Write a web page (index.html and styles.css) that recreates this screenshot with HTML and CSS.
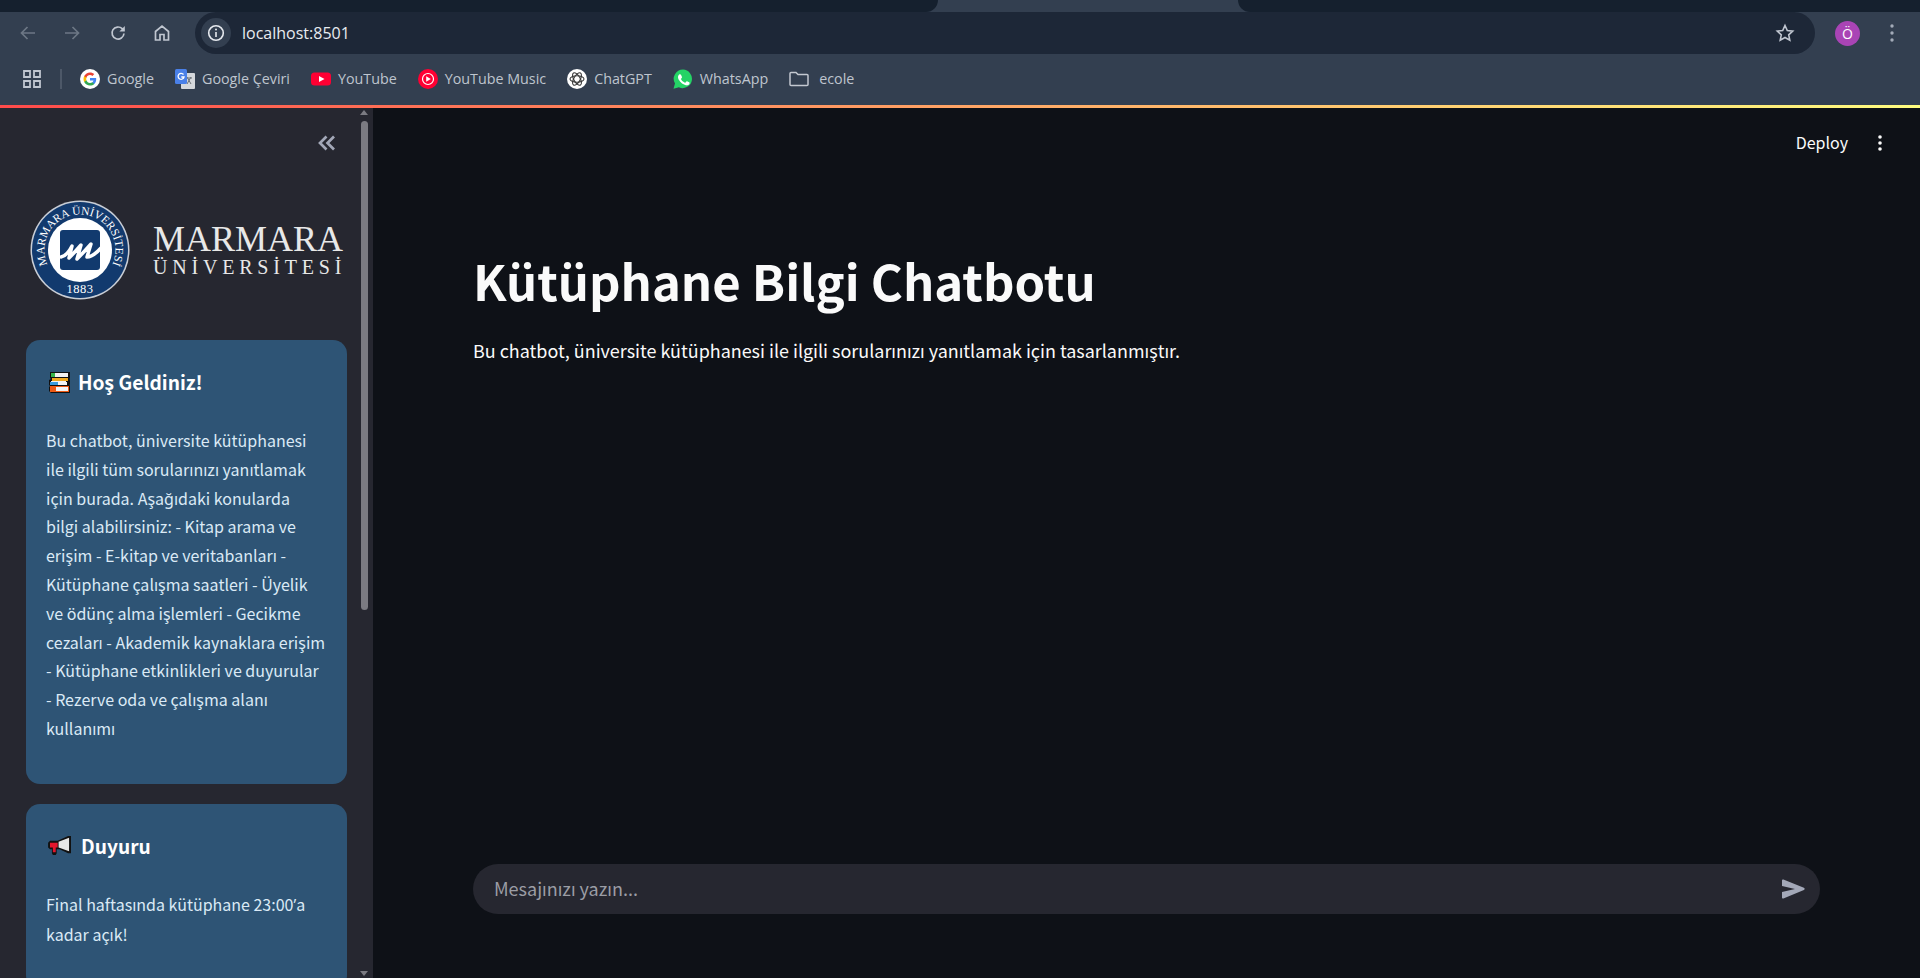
FILE: index.html
```html
<!DOCTYPE html>
<html lang="en">
<head>
    <meta charset="UTF-8">
    <meta name="viewport" content="width=device-width, initial-scale=1.0">
    <title>Kütüphane Bilgi Chatbotu</title>
    <link rel="stylesheet" href="styles.css">
</head>
<body>
    <div class="tab-strip">
        <div class="tab-left"></div>
        <div class="tab-right"></div>
    </div>
    <header class="browser">
        <div class="nav-row">
            <svg class="nav-icon dim" viewBox="0 0 20 20"><path d="M17 10H4M9.500 4L3.500 10l6 6"/></svg>
            <svg class="nav-icon dim" viewBox="0 0 20 20"><path d="M3 10h13M10.500 4l6 6-6 6"/></svg>
            <svg class="nav-icon reload" viewBox="0 0 20 20"><path d="M16 10.500a6 6 0 1 1-1.800-4.800L16 7.500"/><path class="solid" d="M16.800 3v5.400h-5.400z"/></svg>
            <svg class="nav-icon" viewBox="0 0 20 20"><path d="M3.500 17V8.500L10 3l6.500 5.500V17H12v-5.500H8V17z"/></svg>
            <div class="address">
                <span class="info-btn">
                    <svg viewBox="0 0 18 18"><circle cx="9" cy="9" r="7.300"/><path d="M9 8v5"/><circle class="solid" cx="9" cy="5.400" r="1"/></svg>
                </span>
                <span class="url">localhost:8501</span>
                <svg class="star" viewBox="0 0 20 20"><path d="M10 2.500l2.300 5 5.400.6-4 3.700 1.100 5.400L10 14.500l-4.800 2.700 1.100-5.400-4-3.700 5.400-.6z"/></svg>
            </div>
            <span class="avatar">Ö</span>
            <svg class="kebab" viewBox="0 0 4 20"><circle cx="2" cy="3" r="1.700"/><circle cx="2" cy="10" r="1.700"/><circle cx="2" cy="17" r="1.700"/></svg>
        </div>
        <div class="bookmarks">
            <svg class="apps" viewBox="0 0 18 18"><path d="M1 1h6v6H1zM11 1h6v6h-6zM1 11h6v6H1zM11 11h6v6h-6z"/></svg>
            <span class="bm-sep"></span>
            <a class="bm">
                <svg viewBox="0 0 20 20"><circle cx="10" cy="10" r="10" fill="#fff"/><path fill="#4285f4" d="M16.200 10.200c0-.5 0-.9-.1-1.300H10v2.500h3.500c-.2.800-.6 1.500-1.300 2v1.600h2.100c1.200-1.100 1.900-2.800 1.900-4.800z"/><path fill="#34a853" d="M10 16.500c1.800 0 3.200-.6 4.300-1.600l-2.100-1.600c-.6.400-1.300.6-2.200.6-1.700 0-3.100-1.100-3.600-2.700H4.200v1.700c1.100 2.100 3.300 3.600 5.800 3.600z"/><path fill="#fbbc05" d="M6.400 11.200c-.3-.8-.3-1.600 0-2.400V7.100H4.200c-.9 1.800-.9 4 0 5.800z"/><path fill="#ea4335" d="M10 6.100c.9 0 1.800.3 2.400.9l1.900-1.900C13.200 4.100 11.700 3.500 10 3.500c-2.500 0-4.700 1.500-5.800 3.600l2.200 1.700C6.900 7.200 8.300 6.100 10 6.100z"/></svg>
                Google
            </a>
            <a class="bm">
                <svg viewBox="0 0 20 20"><rect x="6" y="4" width="14" height="16" rx="1" fill="#d5d8dc"/><path d="M12 8l4 7M16 8l-4 7M11 9h6" fill="none" stroke="#6b7076" stroke-width="1"/><rect width="12" height="15" rx="1.500" fill="#4a80e8"/><path d="M8.500 5.500a3 3 0 1 0 .5 2.500H6.300" fill="none" stroke="#fff" stroke-width="1.300"/></svg>
                Google Çeviri
            </a>
            <a class="bm">
                <svg viewBox="0 0 20 20"><rect y="3.500" width="20" height="13" rx="3.500" fill="#ff0033"/><path d="M8 7l5.500 3L8 13z" fill="#fff"/></svg>
                YouTube
            </a>
            <a class="bm">
                <svg viewBox="0 0 20 20"><circle cx="10" cy="10" r="10" fill="#ff0033"/><circle cx="10" cy="10" r="5.500" fill="none" stroke="#fff" stroke-width="1.200"/><path d="M8.200 7.300l4.600 2.700-4.600 2.700z" fill="#fff"/></svg>
                YouTube Music
            </a>
            <a class="bm">
                <svg viewBox="0 0 20 20"><circle cx="10" cy="10" r="10" fill="#fff"/><g fill="none" stroke="#3a3a3a" stroke-width="1.100"><ellipse cx="10" cy="10" rx="7" ry="3.200"/><ellipse cx="10" cy="10" rx="7" ry="3.200" transform="rotate(60 10 10)"/><ellipse cx="10" cy="10" rx="7" ry="3.200" transform="rotate(120 10 10)"/></g></svg>
                ChatGPT
            </a>
            <a class="bm">
                <svg viewBox="0 0 20 20"><path fill="#25d366" d="M10 .5a9.300 9.300 0 0 0-8 14L.5 19.700l5.400-1.400A9.300 9.300 0 1 0 10 .5z"/><path fill="#fff" d="M7 5.300c-.3 0-.7.100-1 .5-.4.400-1 1.100-1 2.500s1 2.800 1.200 3c.1.200 2 3.100 4.900 4.300 2.400 1 2.900.8 3.400.7.500 0 1.700-.7 1.900-1.300.2-.7.200-1.200.2-1.300-.1-.2-.3-.2-.5-.4l-2-1c-.3-.1-.5-.1-.7.200l-.9 1.100c-.2.200-.3.200-.6.100-.3-.2-1.200-.5-2.300-1.400-.9-.8-1.400-1.700-1.600-2-.2-.3 0-.5.100-.6l.9-1.100c.1-.2.100-.4 0-.6l-.9-2.100c-.2-.5-.4-.5-.6-.5z"/></svg>
                WhatsApp
            </a>
            <a class="bm bm-folder">
                <svg viewBox="0 0 20 20"><path fill="none" stroke="#c3c8d0" stroke-width="1.500" d="M1 4.500c0-.6.400-1 1-1h5l2 2h9c.6 0 1 .4 1 1v9c0 .6-.4 1-1 1H2c-.6 0-1-.4-1-1z"/></svg>
                ecole
            </a>
        </div>
    </header>
    <div class="accent-line"></div>
    <div class="app">
        <aside class="sidebar">
            <div class="side-content">
                <div class="collapse-row">
                    <svg viewBox="0 0 18 16"><path d="M8.500 1.500L2 8l6.500 6.500M16 1.500L9.500 8l6.500 6.500"/></svg>
                </div>
                <div class="logo">
                    <svg class="seal" viewBox="0 0 100 100">
                        <defs>
                            <path id="seal-top" d="M19.300 67.750A35.500 35.500 0 1 1 80.700 67.750"/>
                        </defs>
                        <circle cx="50" cy="50" r="49.500" fill="#c9ced6"/>
                        <circle cx="50" cy="50" r="48" fill="#123a6e"/>
                        <circle cx="50" cy="50" r="32" fill="#fff"/>
                        <rect x="30" y="30" width="40" height="40" rx="3" fill="#123a6e"/>
                        <path class="seal-m" d="M31 57Q37 56 42 46L39 58Q45 52 51 45L47 59Q54 52 61 44L57 57Q63 57 71 48"/>
                        <text class="seal-text"><textPath href="#seal-top" startOffset="50%" text-anchor="middle">MARMARA ÜNİVERSİTESİ</textPath></text>
                        <text class="seal-year" x="50" y="93" text-anchor="middle">1883</text>
                    </svg>
                    <div class="logo-name">
                        <span class="logo-big">MARMARA</span>
                        <span class="logo-small">ÜNİVERSİTESİ</span>
                    </div>
                </div>
                <section class="card">
                    <h3>
                        <svg class="emoji" viewBox="0 0 21 21">
                            <path fill="#111" d="M1 0h20v6.500l-1 .5 1 .5v5l-1 .5 1 .5v7.500H2l-2-2v-4l1-1-1-1V8l2-1-1-1z"/>
                            <path fill="#35b34a" d="M2 1h4v4H2z"/><path fill="#f2f2f2" d="M6 1h13v4H6z"/>
                            <path fill="#f0a81e" d="M3 6h16v3H3z"/><path fill="#f2f2f2" d="M2 9h15v1H2z"/>
                            <path fill="#3a9bdc" d="M1 10h8v3H1z"/><path fill="#f2f2f2" d="M9 10h9v3H9z"/>
                            <path fill="#ef5a14" d="M1 14h19v6H1z"/><path fill="#f4f4f4" d="M7 15h12v4H7z"/>
                        </svg>
                        Hoş Geldiniz!
                    </h3>
                    <p>Bu chatbot, üniversite kütüphanesi<br>ile ilgili tüm sorularınızı yanıtlamak<br>için burada. Aşağıdaki konularda<br>bilgi alabilirsiniz: - Kitap arama ve<br>erişim - E-kitap ve veritabanları -<br>Kütüphane çalışma saatleri - Üyelik<br>ve ödünç alma işlemleri - Gecikme<br>cezaları - Akademik kaynaklara erişim<br>- Kütüphane etkinlikleri ve duyurular<br>- Rezerve oda ve çalışma alanı<br>kullanımı</p>
                </section>
                <section class="card">
                    <h3>
                        <svg class="emoji emoji-wide" viewBox="0 0 26 22">
                            <path fill="#111" d="M24 1v18h-3L12 15H9v4l-1 2H5l-1-2v-4H2l-2-2V8l2-2h8l11-5z"/>
                            <path fill="#e8e8e8" d="M11 7l11-4v14l-11-4z"/>
                            <path fill="#e3162c" d="M2 8h8v5H2zM5 13h3v5H5z"/>
                        </svg>
                        Duyuru
                    </h3>
                    <p>Final haftasında kütüphane 23:00<span class="apos">’</span>a<br>kadar açık!</p>
                </section>
            </div>
            <div class="scrollbar">
                <span class="arrow-up"></span>
                <span class="thumb"></span>
                <span class="arrow-down"></span>
            </div>
        </aside>
        <main class="main">
            <div class="app-header">
                <span class="deploy">Deploy</span>
                <svg class="app-menu" viewBox="0 0 4 16"><circle cx="2" cy="2" r="1.800"/><circle cx="2" cy="8" r="1.800"/><circle cx="2" cy="14" r="1.800"/></svg>
            </div>
            <div class="content">
                <h1>Kütüphane Bilgi Chatbotu</h1>
                <p>Bu chatbot, üniversite kütüphanesi ile ilgili sorularınızı yanıtlamak için tasarlanmıştır.</p>
            </div>
            <div class="chat-input">
                <span class="placeholder">Mesajınızı yazın...</span>
                <svg class="send" viewBox="0 0 24 20"><path d="M1 1.500c0-.8.700-1.200 1.400-1l20.500 8.300c1 .4 1 1.800 0 2.200L2.400 19.400c-.7.300-1.400-.2-1.400-1V13l13-3L1 7z"/></svg>
            </div>
        </main>
    </div>
</body>
</html>
```

FILE: styles.css
```css
* {
    box-sizing: border-box;
}

html, body {
    height: 100%;
}

body {
    margin: 0;
    display: flex;
    flex-direction: column;
    overflow: hidden;
    background-color: #333f50;
    font-family: "Noto Sans CJK SC", "Noto Sans", sans-serif;
    color: #fafafa;
}

/* browser chrome */
.tab-strip {
    display: flex;
    justify-content: space-between;
    height: 12px;
    flex: none;
}

.tab-left, .tab-right {
    background-color: #15202e;
}

.tab-left {
    width: 938px;
    border-bottom-right-radius: 12px;
}

.tab-right {
    width: 682px;
    border-bottom-left-radius: 12px;
}

.browser {
    flex: none;
    height: 93px;
    background-color: #333f50;
    font-family: "Open Sans", "Noto Sans", sans-serif;
}

.nav-row {
    display: flex;
    align-items: center;
    height: 42px;
    padding-left: 18px;
}

.nav-icon {
    width: 20px;
    height: 20px;
    margin-right: 24px;
    fill: none;
    stroke: #c0c6d0;
    stroke-width: 1.700;
}

.nav-icon.dim {
    stroke: #6d7785;
}

.nav-icon.reload {
    margin-left: 2px;
}

.solid {
    fill: #c0c6d0;
    stroke: none;
}

.address {
    display: flex;
    align-items: center;
    width: 1620px;
    height: 42px;
    margin-left: -1px;
    padding: 0 20px 0 6px;
    border-radius: 21px;
    background-color: #1d2737;
}

.info-btn {
    display: flex;
    align-items: center;
    justify-content: center;
    width: 30px;
    height: 30px;
    border-radius: 50%;
    background-color: #333f50;
}

.info-btn svg {
    width: 18px;
    height: 18px;
    fill: none;
    stroke: #e6e9ee;
    stroke-width: 1.600;
}

.info-btn .solid {
    fill: #e6e9ee;
    stroke: none;
}

.url {
    flex: 1;
    margin-left: 11px;
    font-size: 16px;
    color: #e8ebf0;
}

.star {
    width: 20px;
    height: 20px;
    fill: none;
    stroke: #c0c6d0;
    stroke-width: 1.600;
}

.avatar {
    display: flex;
    align-items: center;
    justify-content: center;
    width: 25px;
    height: 25px;
    margin-left: 20px;
    border-radius: 50%;
    background-color: #a944b5;
    font-size: 14px;
    line-height: 25px;
    color: #fff;
}

.kebab {
    width: 4px;
    height: 20px;
    margin-left: 30px;
    fill: #a3abb8;
}

.bookmarks {
    display: flex;
    align-items: center;
    height: 49px;
    padding-left: 23px;
}

.apps {
    width: 18px;
    height: 18px;
    fill: none;
    stroke: #c0c6d0;
    stroke-width: 1.800;
}

.bm-sep {
    width: 2px;
    height: 20px;
    margin-left: 19px;
    margin-right: 18px;
    background-color: #4d5868;
}

.bm {
    display: flex;
    align-items: center;
    gap: 7px;
    margin-right: 21px;
    font-size: 14.300px;
    color: #bfc5ce;
}

.bm svg {
    width: 20px;
    height: 20px;
}

.bm-folder {
    gap: 10px;
}

.accent-line {
    flex: none;
    height: 3px;
    background: linear-gradient(90deg, #ff4b4b, #fffd80);
}

/* streamlit app */
.app {
    flex: 1;
    display: flex;
    min-height: 0;
}

.sidebar {
    flex: none;
    display: flex;
    width: 373px;
    background-color: #262730;
    overflow: hidden;
}

.side-content {
    flex: 1;
    padding: 0 11px 0 26px;
    min-width: 0;
}

.collapse-row {
    display: flex;
    justify-content: flex-end;
    padding: 27px 11px 0 0;
    height: 92px;
}

.collapse-row svg {
    width: 18px;
    height: 16px;
    fill: none;
    stroke: #a3a8b8;
    stroke-width: 2.700;
}

.logo {
    display: flex;
    align-items: center;
    height: 100px;
    margin-left: 4px;
    gap: 23px;
}

.seal {
    flex: none;
    width: 100px;
    height: 100px;
}

.seal-m {
    fill: none;
    stroke: #fff;
    stroke-width: 3.500;
    stroke-linejoin: round;
    stroke-linecap: round;
}

.seal-text {
    font-family: "Liberation Serif", serif;
    font-size: 11.500px;
    fill: #fff;
}

.seal-year {
    font-family: "Liberation Serif", serif;
    font-size: 12.500px;
    letter-spacing: 0.500px;
    fill: #fff;
}

.logo-name {
    display: flex;
    flex-direction: column;
    font-family: "Liberation Serif", serif;
    color: #e8e8e8;
    white-space: nowrap;
}

.logo-big {
    font-size: 36px;
    line-height: 34px;
}

.logo-small {
    font-size: 20px;
    line-height: 22px;
    letter-spacing: 4.800px;
}

.card {
    margin-top: 40px;
    padding: 19px 20px 21px;
    border-radius: 14px;
    background-color: #2e5475;
}

.card + .card {
    margin-top: 20px;
}

.card h3 {
    display: flex;
    align-items: center;
    gap: 8px;
    height: 46px;
    margin: 0 0 21px;
    font-size: 19.200px;
    font-weight: 700;
    color: #fff;
}

.emoji {
    flex: none;
    width: 21px;
    height: 21px;
    margin-left: 3px;
}

.emoji-wide {
    width: 25px;
    margin-left: 2px;
}

.card p {
    margin: 0 0 20px;
    font-size: 16px;
    line-height: 28.800px;
    white-space: nowrap;
    color: #dbeaf6;
}

.apos {
    font-family: "Open Sans", sans-serif;
}

.scrollbar {
    flex: none;
    display: flex;
    flex-direction: column;
    align-items: center;
    width: 15px;
    padding: 2px 3px 2px 0;
}

.thumb {
    width: 7px;
    height: 489px;
    margin-top: 6px;
    border-radius: 4px;
    background-color: #7b7b82;
}

.arrow-up, .arrow-down {
    width: 0;
    height: 0;
    border-left: 4px solid transparent;
    border-right: 4px solid transparent;
}

.arrow-up {
    border-bottom: 5px solid #7b7b82;
}

.arrow-down {
    margin-top: auto;
    border-top: 5px solid #7b7b82;
}

.main {
    flex: 1;
    display: flex;
    flex-direction: column;
    min-width: 0;
    background-color: #0e1117;
}

.app-header {
    display: flex;
    align-items: center;
    justify-content: flex-end;
    height: 70px;
    padding-right: 38px;
    flex: none;
}

.deploy {
    padding-bottom: 2px;
    font-size: 16px;
    color: #fafafa;
}

.app-menu {
    width: 4px;
    height: 16px;
    margin-left: 30px;
    fill: #fafafa;
}

.content {
    flex: 1;
    padding: 67px 100px 0;
}

.content h1 {
    margin: 0;
    font-size: 49px;
    font-weight: 700;
    line-height: 70px;
}

.content p {
    margin: 21px 0 0;
    font-size: 17.950px;
    line-height: 28px;
}

.chat-input {
    flex: none;
    display: flex;
    align-items: center;
    justify-content: space-between;
    height: 50px;
    margin: 0 100px 64px;
    padding: 0 15px 0 21px;
    border-radius: 25px;
    background-color: #262730;
}

.placeholder {
    padding-bottom: 2px;
    font-size: 18px;
    color: #9b9da5;
}

.send {
    width: 24px;
    height: 20px;
    fill: #a3a8b8;
}
```
